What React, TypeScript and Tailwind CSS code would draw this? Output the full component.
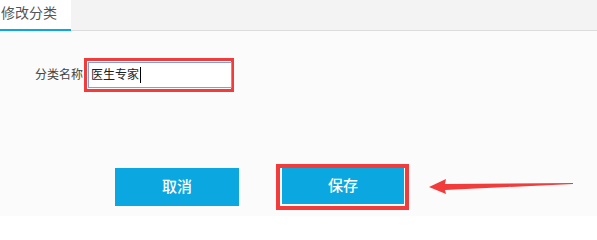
export default function App() {
  return (
    <div
      className="w-[597px] h-[216px] bg-[#fbfbfb] overflow-hidden"
      style={{ fontFamily: '"Liberation Sans", "Noto Sans CJK SC", sans-serif' }}
    >
      {/* tab bar */}
      <div className="flex h-[31px] bg-[#f3f3f3] border-b border-[#dcdcdc]">
        <div className="w-[71px] h-[31px] bg-white border-b-2 border-[#0aa7e0] text-[14px] leading-[26px] text-[#555] pl-[1px]">
          修改分类
        </div>
      </div>

      {/* form row */}
      <div className="flex items-center mt-[27px] ml-[35px]">
        <span className="text-[12px] text-[#444] w-[49px]">分类名称</span>
        <div className="border-[3px] border-[#f23b3b] w-[150px] h-[34px] p-[1px]">
          <div className="h-full w-[144px] bg-white border border-[#7fa3d8] flex items-center pl-[2px]">
            <span className="text-[12px] text-[#222] leading-none">医生专家</span>
            <span className="w-px h-[16px] bg-black ml-[1px]" />
          </div>
        </div>
      </div>

      {/* buttons */}
      <div className="flex items-center mt-[72px] ml-[115px]">
        <button className="w-[124px] h-[38px] bg-[#0aa7e0] text-white text-[15px] font-medium">取消</button>
        <div className="ml-[37px] border-[4px] border-[#f23b3b] w-[133px] h-[46px] bg-white flex">
          <div className="ml-[2px] w-[122px] h-[36px] bg-[#0aa7e0] text-white text-[15px] font-medium flex items-center justify-center">
            保存
          </div>
        </div>
        <svg width="150" height="20" viewBox="0 0 150 20" className="ml-[20px]">
          <path d="M0 10 L17 2 L16 7 L144 6 L144 7 L16 13 L17 17 Z" fill="#f23b3b" />
        </svg>
      </div>
    </div>
  );
}
